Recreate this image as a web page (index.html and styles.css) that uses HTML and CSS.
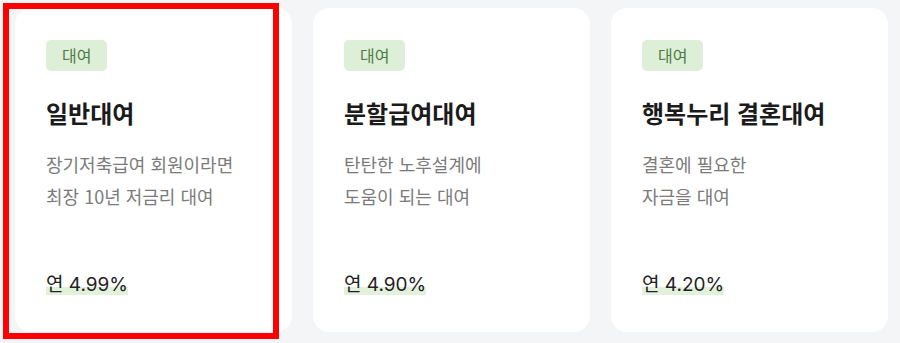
FILE: index.html
```html
<!DOCTYPE html>
<html lang="ko">
<head>
<meta charset="utf-8">
<link rel="stylesheet" href="styles.css">
</head>
<body>
<div class="page">
  <div class="cards">
    <div class="card">
      <span class="badge">대여</span>
      <h3 class="title">일반대여</h3>
      <p class="desc">장기저축급여 회원이라면<br>최장 10년 저금리 대여</p>
      <p class="rate"><span class="hl">연 4.99%</span></p>
    </div>
    <div class="card">
      <span class="badge">대여</span>
      <h3 class="title">분할급여대여</h3>
      <p class="desc">탄탄한 노후설계에<br>도움이 되는 대여</p>
      <p class="rate"><span class="hl">연 4.90%</span></p>
    </div>
    <div class="card">
      <span class="badge">대여</span>
      <h3 class="title">행복누리 결혼대여</h3>
      <p class="desc">결혼에 필요한<br>자금을 대여</p>
      <p class="rate"><span class="hl">연 4.20%</span></p>
    </div>
  </div>
  <div class="focus-ring"></div>
</div>
</body>
</html>
```

FILE: styles.css
```css
* { box-sizing: border-box; }
html, body {
  margin: 0;
  padding: 0;
  background: #f4f5f7;
  font-family: "Noto Sans CJK KR", "Noto Sans", sans-serif;
}
.page {
  position: relative;
  width: 900px;
  height: 343px;
}
.cards {
  display: grid;
  grid-template-columns: repeat(3, 1fr);
  gap: 21px;
  padding: 8px 12px 0 15px;
}
.card {
  background: #ffffff;
  border-radius: 16px;
  height: 324px;
  padding: 32px 31px 34px;
  display: flex;
  flex-direction: column;
  align-items: flex-start;
}
.badge {
  display: inline-block;
  height: 31px;
  line-height: 31px;
  padding: 0 16px;
  border-radius: 5px;
  background: #ddefd7;
  color: #4e7a49;
  font-size: 16px;
}
.title {
  margin: 26px 0 0;
  font-size: 24px;
  line-height: 32px;
  font-weight: 700;
  color: #1b1b1b;
}
.desc {
  margin: 19px 0 0;
  font-size: 18px;
  line-height: 32px;
  color: #7b7b7b;
}
.rate {
  margin: auto 0 0;
  font-family: "Inter", "Noto Sans CJK KR", sans-serif;
  font-size: 19px;
  line-height: 26px;
  color: #222222;
}
.hl {
  background: linear-gradient(to bottom, transparent 60%, #e2f1dc 60%, #e2f1dc 94%, transparent 94%);
}
.focus-ring {
  position: absolute;
  left: 3px;
  top: 3px;
  width: 276px;
  height: 336px;
  border: 6px solid #ff0000;
  pointer-events: none;
}
```
